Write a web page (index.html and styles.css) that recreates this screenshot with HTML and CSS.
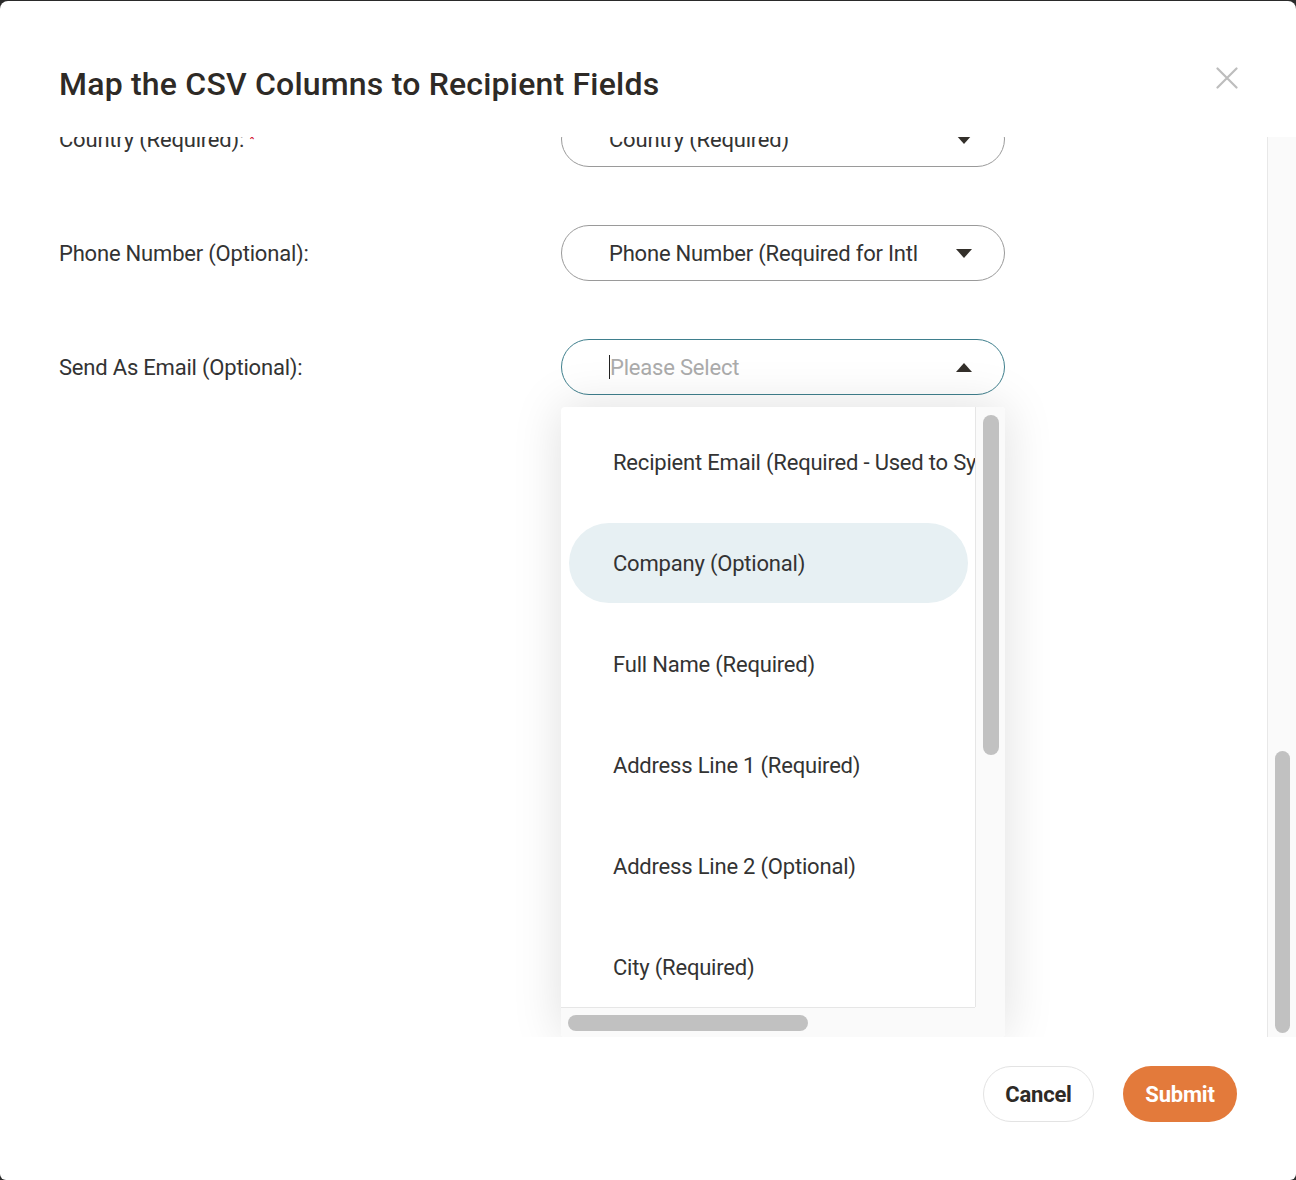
FILE: index.html
```html
<!DOCTYPE html>
<html>
<head>
  <meta charset="utf-8">
  <title>Map CSV Columns</title>
  <link rel="stylesheet" href="styles.css">
</head>
<body>
  <div class="modal">
    <header class="modal-head">
      <h1 class="modal-title">Map the CSV Columns to Recipient Fields</h1>
      <button class="close" aria-label="Close">
        <svg width="22" height="22" viewBox="0 0 22 22"><path d="M1.5 1.5 L20.5 20.5 M20.5 1.5 L1.5 20.5" stroke="#bdbdbd" stroke-width="2.2" stroke-linecap="round" fill="none"/></svg>
      </button>
    </header>

    <section class="modal-body">
      <div class="scroll-view">
        <div class="rows">
          <div class="row">
            <label class="field-label">Country (Required): <span class="req">*</span></label>
            <div class="select">
              <span class="select-value">Country (Required)</span>
              <span class="caret down"></span>
            </div>
          </div>
          <div class="row">
            <label class="field-label">Phone Number (Optional):</label>
            <div class="select">
              <span class="select-value">Phone Number (Required for Intl</span>
              <span class="caret down"></span>
            </div>
          </div>
          <div class="row">
            <label class="field-label">Send As Email (Optional):</label>
            <div class="select open">
              <span class="select-value placeholder"><i class="text-cursor"></i>Please Select</span>
              <span class="caret up"></span>

              <div class="dropdown">
                <ul class="options">
                  <li>Recipient Email (Required - Used to Sync Contacts)</li>
                  <li class="hover">Company (Optional)</li>
                  <li>Full Name (Required)</li>
                  <li>Address Line 1 (Required)</li>
                  <li>Address Line 2 (Optional)</li>
                  <li>City (Required)</li>
                  <li>State (Required)</li>
                </ul>
                <div class="vtrack"><div class="vthumb"></div></div>
                <div class="htrack"><div class="hthumb"></div></div>
                <div class="corner"></div>
              </div>
            </div>
          </div>
        </div>
      </div>
      <div class="scrollbar"><div class="scrollbar-thumb"></div></div>
    </section>

    <footer class="modal-foot">
      <button class="btn btn-cancel">Cancel</button>
      <button class="btn btn-submit">Submit</button>
    </footer>
  </div>
</body>
</html>
```

FILE: styles.css
```css
html, body { margin: 0; padding: 0; }
body {
  background: #2a2a2a;
  font-family: Roboto, "Liberation Sans", Arial, sans-serif;
  color: #333;
}

.modal {
  margin-top: 1px;
  height: 1179px;
  background: #fff;
  border-radius: 8px 8px 6px 6px;
  display: flex;
  flex-direction: column;
  overflow: hidden;
}

/* header */
.modal-head {
  height: 136px;
  flex: none;
  display: flex;
  justify-content: space-between;
  align-items: flex-start;
  padding: 0 58px 0 59px;
  box-sizing: border-box;
}
.modal-title {
  margin: 61px 0 0;
  font-size: 32px;
  line-height: 44px;
  font-weight: 500;
  color: #2e2a26;
  letter-spacing: 0.2px;
}
.close {
  margin-top: 66px;
  border: 0;
  background: none;
  padding: 0;
  width: 22px;
  height: 22px;
  cursor: pointer;
}

/* body with scroll area */
.modal-body {
  height: 900px;
  flex: none;
  display: flex;
}
.scroll-view {
  flex: 1;
  overflow: hidden;
}
.rows {
  margin-top: -26px;
  padding-left: 59px;
}
.row {
  display: grid;
  grid-template-columns: 502px 444px;
  align-items: center;
  height: 56px;
  margin-bottom: 58px;
}
.field-label {
  font-size: 22px;
  letter-spacing: -0.2px;
  color: #333;
}
.req { color: #d0021b; font-size: 13px; position: relative; top: -4px; }

.select {
  position: relative;
  height: 56px;
  box-sizing: border-box;
  border: 1px solid #9a9a9a;
  border-radius: 28px;
  display: flex;
  align-items: center;
  padding: 0 32px 0 47px;
}
.select.open { border-color: #3f7f8d; }
.select-value {
  flex: 1;
  font-size: 22px;
  letter-spacing: -0.2px;
  color: #333;
  white-space: nowrap;
  overflow: hidden;
}
.select-value.placeholder { color: #ababab; display: flex; align-items: center; }
.text-cursor {
  display: inline-block;
  width: 1px;
  height: 24px;
  background: #222;
}
.caret {
  width: 0;
  height: 0;
  border-left: 8px solid transparent;
  border-right: 8px solid transparent;
}
.caret.down { border-top: 9px solid #332f2a; }
.caret.up { border-bottom: 9px solid #332f2a; }

/* dropdown overlay */
.dropdown {
  position: absolute;
  left: -1px;
  top: 67px;
  width: 444px;
  height: 630px;
  background: #fff;
  border-radius: 4px;
  box-shadow: 0 0 50px rgba(0, 0, 0, 0.13);
  display: grid;
  grid-template-columns: 414px 30px;
  grid-template-rows: 600px 30px;
  overflow: hidden;
}
.options {
  list-style: none;
  margin: 0;
  padding: 15px 0 0 8px;
  overflow: hidden;
}
.options li {
  width: 355px;
  height: 80px;
  margin-bottom: 21px;
  padding-left: 44px;
  border-radius: 40px;
  display: flex;
  align-items: center;
  font-size: 22px;
  letter-spacing: -0.2px;
  color: #333;
  white-space: nowrap;
}
.options li.hover { background: #e7f0f3; }

.vtrack {
  background: #fafafa;
  border-left: 1px solid #e6e6e6;
  padding: 8px 6px 0 7px;
}
.vthumb {
  height: 340px;
  border-radius: 8px;
  background: #c1c1c1;
}
.htrack {
  background: #fafafa;
  border-top: 1px solid #e6e6e6;
  padding: 7px 0 0 7px;
}
.hthumb {
  width: 240px;
  height: 16px;
  border-radius: 8px;
  background: #c1c1c1;
}
.corner { background: #fafafa; }

/* main scrollbar */
.scrollbar {
  width: 29px;
  flex: none;
  background: #fafafa;
  border-left: 1px solid #e8e8e8;
  padding: 614px 6px 0 7px;
  box-sizing: border-box;
}
.scrollbar-thumb {
  height: 282px;
  border-radius: 8px;
  background: #c1c1c1;
}

/* footer */
.modal-foot {
  flex: 1;
  display: flex;
  justify-content: flex-end;
  align-items: flex-start;
  gap: 29px;
  padding: 29px 59px 0 0;
}
.btn {
  height: 56px;
  border-radius: 28px;
  font-family: Roboto, "Liberation Sans", Arial, sans-serif;
  font-size: 22px;
  font-weight: 700;
  letter-spacing: -0.2px;
  cursor: pointer;
}
.btn-cancel {
  width: 111px;
  background: #fff;
  color: #2e2a26;
  border: 1px solid #e3e3e3;
}
.btn-submit {
  width: 114px;
  background: #e37a3b;
  color: #fff;
  border: 0;
}
```
